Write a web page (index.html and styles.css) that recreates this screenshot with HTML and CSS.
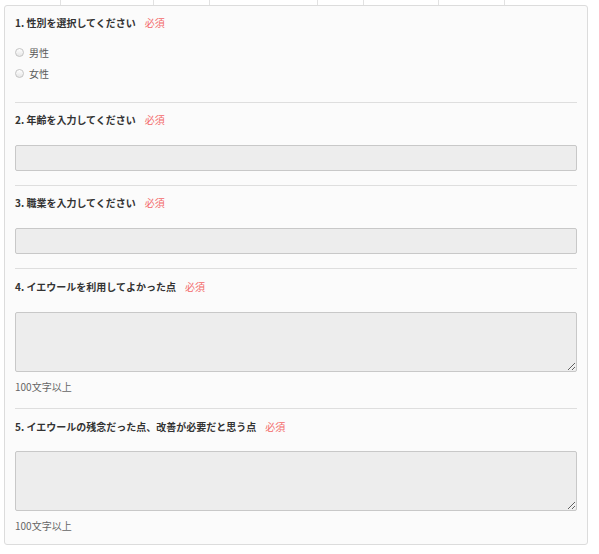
FILE: index.html
```html
<!DOCTYPE html>
<html lang="ja">
<head>
<meta charset="utf-8">
<title>アンケート</title>
<link rel="stylesheet" href="styles.css">
</head>
<body>
<div class="toprow">
  <span class="cell w60"></span><span class="cell w93"></span><span class="cell w56"></span><span class="cell w108"></span><span class="cell w46"></span><span class="cell w75"></span><span class="cell w66"></span>
</div>
<form class="card">
  <section class="q q1">
    <h3 class="qt">1. 性別を選択してください<span class="req">必須</span></h3>
    <div class="radios">
      <label class="radio"><span class="dot"></span>男性</label>
      <label class="radio"><span class="dot"></span>女性</label>
    </div>
  </section>
  <section class="q">
    <h3 class="qt">2. 年齢を入力してください<span class="req">必須</span></h3>
    <input class="field" type="text">
  </section>
  <section class="q">
    <h3 class="qt">3. 職業を入力してください<span class="req">必須</span></h3>
    <input class="field" type="text">
  </section>
  <section class="q q4">
    <h3 class="qt">4. イエウールを利用してよかった点<span class="req">必須</span></h3>
    <textarea class="area"></textarea>
    <p class="note">100文字以上</p>
  </section>
  <section class="q last">
    <h3 class="qt">5. イエウールの残念だった点、改善が必要だと思う点<span class="req">必須</span></h3>
    <textarea class="area"></textarea>
    <p class="note">100文字以上</p>
  </section>
</form>
</body>
</html>
```
FILE: styles.css
```css
html, body {
  margin: 0;
  padding: 0;
  background: #ffffff;
  font-family: "Noto Sans CJK JP", "Noto Sans", sans-serif;
  color: #333;
}
.toprow {
  display: flex;
  height: 5px;
}
.cell {
  display: block;
  height: 5px;
  border-right: 1px solid #e2e2e2;
  box-sizing: border-box;
}
.w60 { width: 61px; }
.w93 { width: 93px; }
.w56 { width: 56px; }
.w108 { width: 108px; }
.w46 { width: 46px; }
.w75 { width: 75px; }
.w66 { width: 66px; }
.card {
  margin: 0 0 0 4px;
  width: 584px;
  box-sizing: border-box;
  background: #fbfbfb;
  border: 1px solid #dcdcdc;
  border-radius: 3px;
  padding: 0 10px 0 10px;
}
.q {
  padding: 10px 0 14px;
  border-bottom: 1px solid #dedede;
}
.q4 {
  padding-top: 11px;
}
.q.last {
  border-bottom: none;
  padding-top: 11px;
  padding-bottom: 11px;
}
.q1 {
  padding-bottom: 18px;
}
.qt {
  margin: 0 0 18px;
  font-size: 10px;
  line-height: 14px;
  font-weight: bold;
  color: #333;
}
.last .qt {
  margin-bottom: 17px;
}
.req {
  margin-left: 9px;
  color: #f36a6a;
  font-weight: normal;
}
.radios {
  display: flex;
  flex-direction: column;
}
.q1 .qt { margin-bottom: 12px; }
.radio {
  display: flex;
  align-items: center;
  height: 21px;
  font-size: 10px;
  color: #5a5a5a;
}
.dot {
  width: 7px;
  height: 7px;
  border: 1px solid #c4c4c4;
  border-radius: 50%;
  background: linear-gradient(#ffffff, #e6e6e6);
  margin: 0 5px 0 0;
  box-sizing: content-box;
}
.field {
  display: block;
  width: 100%;
  height: 26px;
  box-sizing: border-box;
  margin: 0;
  background: #ededed;
  border: 1px solid #c8c8c8;
  border-radius: 2px;
}
.area {
  display: block;
  width: 100%;
  height: 60px;
  box-sizing: border-box;
  margin: 0;
  background: #ededed;
  border: 1px solid #c8c8c8;
  border-radius: 2px;
  resize: vertical;
}
.note {
  margin: 8px 0 0;
  font-size: 10px;
  line-height: 14px;
  color: #666;
}
```
